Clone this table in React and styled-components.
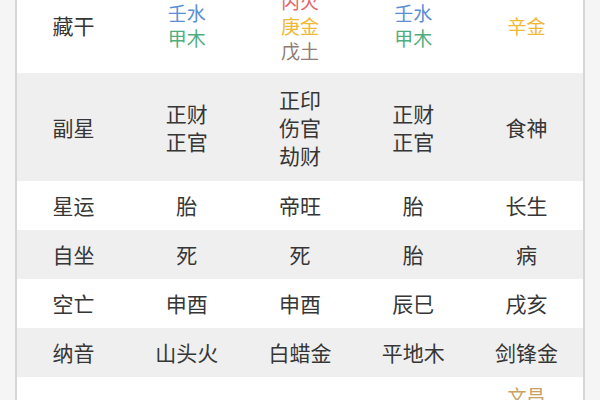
import React from "react";
import styled, { createGlobalStyle } from "styled-components";

const GlobalStyle = createGlobalStyle`
  html, body {
    margin: 0;
    padding: 0;
    background: #f5f5f5;
    overflow: hidden;
  }
  body {
    font-family: "Noto Sans CJK SC", "Noto Sans", sans-serif;
  }
`;

const COLORS = {
  water: "#5b8ed3",
  wood: "#4fae80",
  fire: "#e3676b",
  metal: "#f0b833",
  earth: "#8f7d72",
  star: "#c9a064",
};

// each row: label, cells, row options
const rows = [
  {
    label: "藏干",
    pad: 10.5,
    lh: 25,
    small: true,
    cells: [
      [["壬水", "water"], ["甲木", "wood"]],
      [["丙火", "fire"], ["庚金", "metal"], ["戊土", "earth"]],
      [["壬水", "water"], ["甲木", "wood"]],
      [["辛金", "metal"]],
    ],
  },
  {
    label: "副星",
    pad: 12,
    lh: 28,
    shade: true,
    cells: [["正财", "正官"], ["正印", "伤官", "劫财"], ["正财", "正官"], ["食神"]],
  },
  { label: "星运", pad: 10, lh: 29, cells: [["胎"], ["帝旺"], ["胎"], ["长生"]] },
  { label: "自坐", pad: 10, lh: 29, shade: true, cells: [["死"], ["死"], ["胎"], ["病"]] },
  { label: "空亡", pad: 10, lh: 29, cells: [["申酉"], ["申酉"], ["辰巳"], ["戌亥"]] },
  {
    label: "纳音",
    pad: 10,
    lh: 29,
    shade: true,
    cells: [["山头火"], ["白蜡金"], ["平地木"], ["剑锋金"]],
  },
  {
    label: "",
    pad: 6,
    lh: 25,
    small: true,
    cells: [[], [], [], [["文昌", "star"]]],
  },
];

const Panel = styled.div`
  margin: -23px 15px 0;
  border-left: 2px solid #d6d6d6;
  border-right: 2px solid #d6d6d6;
  background: #ffffff;
`;

const Row = styled.div`
  display: grid;
  grid-template-columns: repeat(5, 1fr);
  background: ${(p) => (p.$shade ? "#efefef" : "#ffffff")};
  padding: ${(p) => p.$pad}px 0;
`;

const Cell = styled.div`
  display: flex;
  flex-direction: column;
  align-items: center;
  justify-content: center;
  font-size: ${(p) => (p.$small ? 19 : 21)}px;
  line-height: ${(p) => p.$lh}px;
  color: #363636;
`;

const Label = styled(Cell)`
  font-size: 21px;
`;

const Line = styled.span`
  color: ${(p) => (p.$tone ? COLORS[p.$tone] : "inherit")};
  white-space: nowrap;
`;

export default function App() {
  return (
    <>
      <GlobalStyle />
      <Panel>
        {rows.map((row, r) => (
          <Row key={r} $shade={row.shade} $pad={row.pad}>
            <Label $lh={row.lh}>{row.label}</Label>
            {row.cells.map((cell, i) => (
              <Cell key={i} $lh={row.lh} $small={row.small}>
                {cell.map((item, j) =>
                  Array.isArray(item) ? (
                    <Line key={j} $tone={item[1]}>
                      {item[0]}
                    </Line>
                  ) : (
                    <Line key={j}>{item}</Line>
                  )
                )}
              </Cell>
            ))}
          </Row>
        ))}
      </Panel>
    </>
  );
}
